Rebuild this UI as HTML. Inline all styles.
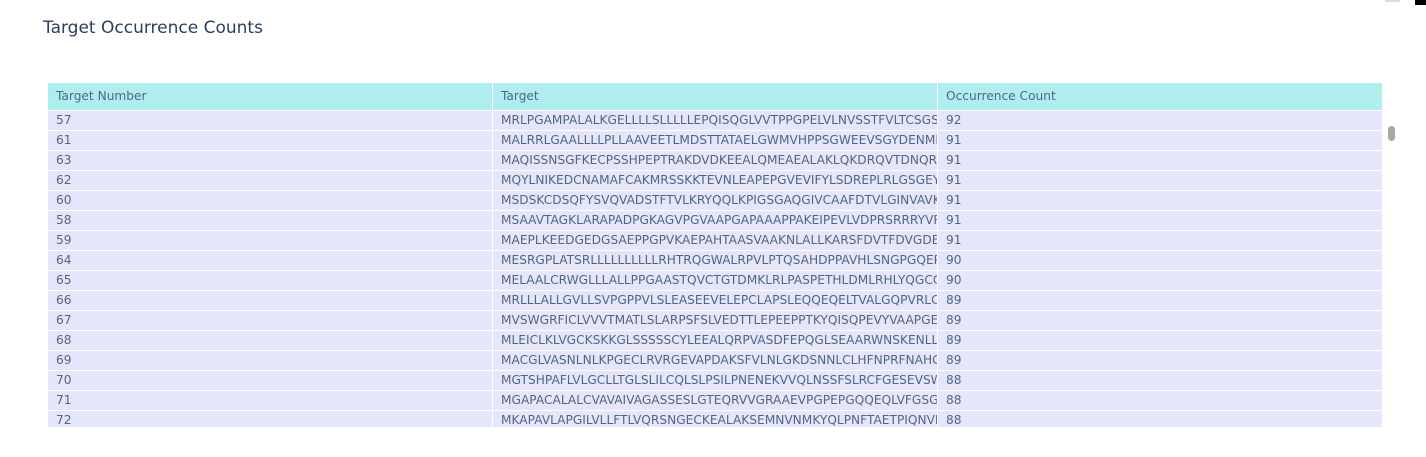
<!DOCTYPE html>
<html><head><meta charset="utf-8"><style>
html,body{margin:0;padding:0;background:#fff;width:1426px;height:457px;overflow:hidden;position:relative;font-family:"DejaVu Sans","Liberation Sans",sans-serif;}
.title{position:absolute;left:43px;top:18px;font-size:17px;color:#2a3f5f;}
.tbl{position:absolute;left:48px;top:83px;width:1334px;height:344px;overflow:hidden;}
.row{display:flex;height:20px;border-bottom:1px solid #fff;box-sizing:border-box;}
.hdr{height:28px;background:#afeeee;}
.c{box-sizing:border-box;width:445px;border-right:1px solid #fff;padding-left:8px;font-size:12.2px;color:#506784;line-height:18px;white-space:nowrap;overflow:hidden;background:#e6e6fa;}
.hdr .c{background:#afeeee;line-height:26px;}
.c:last-child{border-right:none;width:444px}
.sb{position:absolute;left:1388px;top:126px;width:7px;height:15px;border-radius:4px;background:#a8a8a8;}
</style></head><body>
<div class="title">Target Occurrence Counts</div>
<div class="tbl">
<div class="row hdr"><div class="c">Target Number</div><div class="c">Target</div><div class="c">Occurrence Count</div></div>
<div class="row"><div class="c">57</div><div class="c">MRLPGAMPALALKGELLLLSLLLLLEPQISQGLVVTPPGPELVLNVSSTFVLTCSGSAP</div><div class="c">92</div></div>
<div class="row"><div class="c">61</div><div class="c">MALRRLGAALLLLPLLAAVEETLMDSTTATAELGWMVHPPSGWEEVSGYDENMNTIR</div><div class="c">91</div></div>
<div class="row"><div class="c">63</div><div class="c">MAQISSNSGFKECPSSHPEPTRAKDVDKEEALQMEAEALAKLQKDRQVTDNQRGFE</div><div class="c">91</div></div>
<div class="row"><div class="c">62</div><div class="c">MQYLNIKEDCNAMAFCAKMRSSKKTEVNLEAPEPGVEVIFYLSDREPLRLGSGEYTAE</div><div class="c">91</div></div>
<div class="row"><div class="c">60</div><div class="c">MSDSKCDSQFYSVQVADSTFTVLKRYQQLKPIGSGAQGIVCAAFDTVLGINVAVKKL</div><div class="c">91</div></div>
<div class="row"><div class="c">58</div><div class="c">MSAAVTAGKLARAPADPGKAGVPGVAAPGAPAAAPPAKEIPEVLVDPRSRRRYVRGR</div><div class="c">91</div></div>
<div class="row"><div class="c">59</div><div class="c">MAEPLKEEDGEDGSAEPPGPVKAEPAHTAASVAAKNLALLKARSFDVTFDVGDEYEI</div><div class="c">91</div></div>
<div class="row"><div class="c">64</div><div class="c">MESRGPLATSRLLLLLLLLLLRHTRQGWALRPVLPTQSAHDPPAVHLSNGPGQEPIAV</div><div class="c">90</div></div>
<div class="row"><div class="c">65</div><div class="c">MELAALCRWGLLLALLPPGAASTQVCTGTDMKLRLPASPETHLDMLRHLYQGCQVVQ</div><div class="c">90</div></div>
<div class="row"><div class="c">66</div><div class="c">MRLLLALLGVLLSVPGPPVLSLEASEEVELEPCLAPSLEQQEQELTVALGQPVRLCCG</div><div class="c">89</div></div>
<div class="row"><div class="c">67</div><div class="c">MVSWGRFICLVVVTMATLSLARPSFSLVEDTTLEPEEPPTKYQISQPEVYVAAPGESLE</div><div class="c">89</div></div>
<div class="row"><div class="c">68</div><div class="c">MLEICLKLVGCKSKKGLSSSSSCYLEEALQRPVASDFEPQGLSEAARWNSKENLLAGP</div><div class="c">89</div></div>
<div class="row"><div class="c">69</div><div class="c">MACGLVASNLNLKPGECLRVRGEVAPDAKSFVLNLGKDSNNLCLHFNPRFNAHGDAN</div><div class="c">89</div></div>
<div class="row"><div class="c">70</div><div class="c">MGTSHPAFLVLGCLLTGLSLILCQLSLPSILPNENEKVVQLNSSFSLRCFGESEVSWQY</div><div class="c">88</div></div>
<div class="row"><div class="c">71</div><div class="c">MGAPACALALCVAVAIVAGASSESLGTEQRVVGRAAEVPGPEPGQQEQLVFGSGDAVE</div><div class="c">88</div></div>
<div class="row"><div class="c">72</div><div class="c">MKAPAVLAPGILVLLFTLVQRSNGECKEALAKSEMNVNMKYQLPNFTAETPIQNVILHE</div><div class="c">88</div></div>
</div>
<div class="sb"></div>
<div style="position:absolute;left:1385px;top:0;width:15px;height:2px;background:#ddd"></div>
<div style="position:absolute;left:1415px;top:0;width:11px;height:5px;background:#000"></div>
</body></html>
